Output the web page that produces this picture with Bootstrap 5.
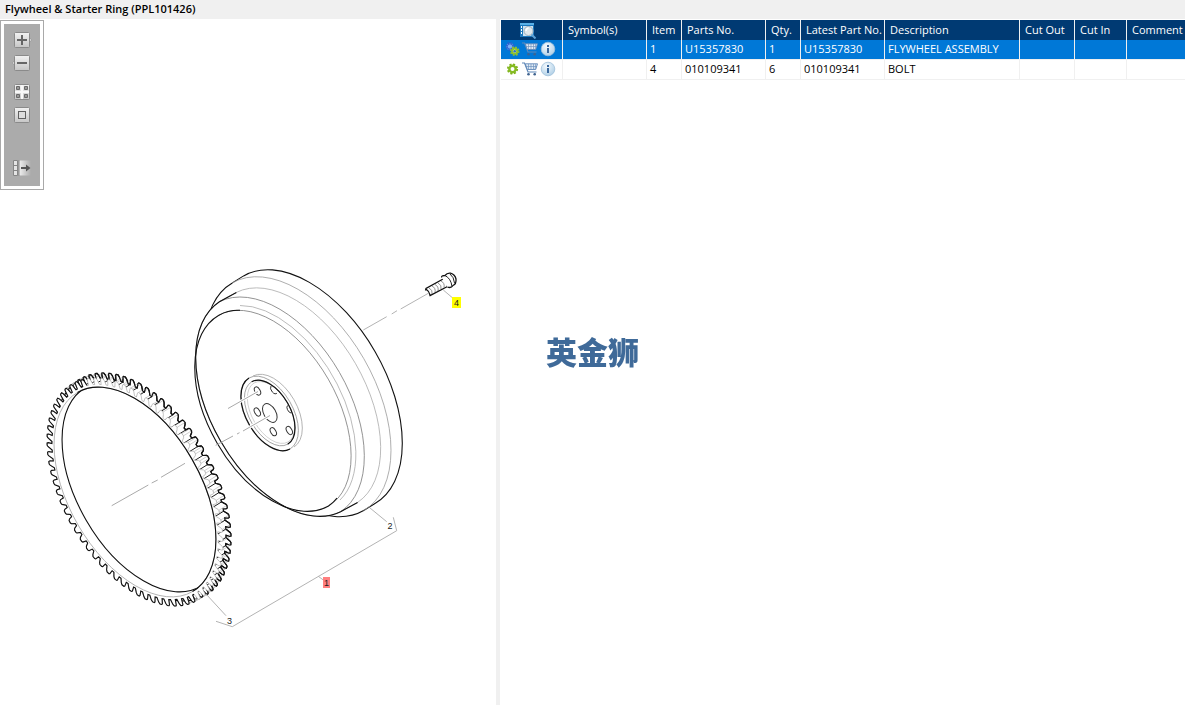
<!DOCTYPE html>
<html lang="en">
<head>
<meta charset="utf-8">
<meta name="viewport" content="width=device-width, initial-scale=1">
<title>Flywheel &amp; Starter Ring (PPL101426)</title>
<link href="https://cdn.jsdelivr.net/npm/bootstrap@5.3.0/dist/css/bootstrap.min.css" rel="stylesheet">
<style>
  body { font-family: "Open Sans", "Noto Sans", sans-serif; font-size: 11px; line-height: 19px; color: #000; background: #f0f0f0; }
  .page-title { font-size: 11px; font-weight: 600; line-height: 18px; padding: 0 0 1px 5px; }
  .panes { display: grid; grid-template-columns: 496fr 4px 685fr; min-height: 0; }
  .pane { background: #fff; min-width: 0; }
  .tools { top: 1px; width: 44px; padding: 3px; border: 1px solid #a9a9a9; background: #fff; }
  .tools-inner { background: #ababab; padding: 8px 0 10px; gap: 7px; }
  .tool-btn { display: block; padding: 0; border: 0; background: none; line-height: 0; }
  .gap-after-zoom { margin-top: 6px; }
  .gap-after-fit { margin-top: 30px; }
  .drawing text { font-family: "Liberation Sans", sans-serif; font-size: 9px; text-anchor: middle; fill: #222; }
  .parts { table-layout: fixed; margin: 1px 0 0 1px; width: calc(100% - 1px); min-width: 684px; border-collapse: separate; border-spacing: 0; }
  .parts th, .parts td { padding: 0 0 0 3px; white-space: nowrap; overflow: hidden; border-right: 1px solid #f0f0f0; }
  .parts th:last-child, .parts td:last-child { border-right: 0; }
  .parts th { height: 20px; line-height: 20px; padding-left: 5px; font-weight: 400; color: #fff; background: #003a73; }
  .parts td { height: 20px; line-height: 18px; padding-bottom: 1px; border-bottom: 1px solid #f0f0f0; }
  .parts .chosen td { color: #fff; background: #0078d7; }
  .parts .actions { padding-left: 4px; }
  .row-icons { gap: 2px; }
  .row-btn { padding: 0; border: 0; background: none; line-height: 0; }
  .search-btn { margin-right: 8px; }
  .stamp { font-family: "Noto Sans CJK SC", sans-serif; font-weight: 900; font-size: 31px; line-height: 32px; padding-bottom: 5px; color: #3f6a99; white-space: nowrap; }
  .c-act { width: 62px; } .c-wide { width: 84px; } .c-slim { width: 35px; }
  .c-desc { width: 135px; } .c-out { width: 55px; } .c-in { width: 52px; }
</style>
</head>
<body class="vh-100 d-flex flex-column overflow-hidden">

<svg width="0" height="0" class="position-absolute" aria-hidden="true">
  <defs>
    <linearGradient id="face" x1="0" y1="0" x2="0" y2="1"><stop offset="0" stop-color="#f2f2f2"/><stop offset="1" stop-color="#c6c6c6"/></linearGradient>
    <linearGradient id="fade" x1="0" y1="0" x2="1" y2="0"><stop offset="0" stop-color="#f0f0f0"/><stop offset="1" stop-color="#ababab"/></linearGradient>
    <radialGradient id="glass" cx=".4" cy=".3" r=".8"><stop offset="0" stop-color="#f4fafe"/><stop offset="1" stop-color="#a9cbe4"/></radialGradient>
    <symbol id="cart" viewBox="0 0 16 16">
      <path d="M0 2h2.500l3.500 9h8.500" fill="none" stroke="#5f88b8" stroke-width="1.200"/>
      <path d="M3.300 2.800h12.200l-1.800 5.700h-8.400z" fill="#e2ebf4" stroke="#5f88b8" stroke-width=".9"/>
      <path d="M6.500 3v5M9 3v5M11.500 3v5M13.700 3l-.5 5M4 5.500h11" stroke="#6f94c0" stroke-width=".7"/>
      <circle cx="6.500" cy="13.200" r="1.300" fill="#3f638f"/><circle cx="12.700" cy="13.200" r="1.300" fill="#3f638f"/>
    </symbol>
    <symbol id="info" viewBox="0 0 16 16">
      <circle cx="8" cy="8" r="6.800" fill="url(#glass)" stroke="#9fc0da" stroke-width=".8"/>
      <path d="M7 4h2v2H7zM7 7h2v5H7z" fill="#3a699f"/>
    </symbol>
    <symbol id="cog" viewBox="-7 -7 14 14">
      <circle r="4.600" fill="none" stroke="#7fb31c" stroke-width="2" stroke-dasharray="2 1.613"/>
      <circle r="3.200" fill="none" stroke="#86bb22" stroke-width="2.400"/>
    </symbol>
    <symbol id="cogs" viewBox="0 0 14 14">
      <g transform="translate(4.500 4.500)"><circle r="3.600" fill="#6fa4ee" stroke="#2a5fd0" stroke-width="1.800" stroke-dasharray="1.600 1.230"/><circle r="2.700" fill="#7fb0f5" stroke="#2a5fd0"/></g>
      <g transform="translate(9.200 9.200)"><circle r="4" fill="none" stroke="#8fc12b" stroke-width="1.600" stroke-dasharray="1.700 1.442"/><circle r="2.600" fill="#d9ecb0" stroke="#8fc12b" stroke-width="2"/><circle r="1.300" fill="#2d74c4"/></g>
    </symbol>
  </defs>
</svg>

<h1 class="page-title m-0 flex-shrink-0">Flywheel &amp; Starter Ring (PPL101426)</h1>

<main class="panes flex-grow-1">
  <section class="pane position-relative overflow-hidden" aria-label="Drawing">
    <div class="tools position-absolute start-0">
      <div class="tools-inner d-flex flex-column align-items-center">
        <button class="tool-btn" type="button" aria-label="Zoom in">
          <svg width="20" height="16" viewBox="0 0 20 16"><path d="M17 5l2.500 3L17 11z" fill="#eee" stroke="#8a8a8a" stroke-width=".7"/><rect x="2.500" y=".5" width="15" height="15" rx="1" fill="url(#face)" stroke="#8a8a8a"/><path d="M5 8h10M10 3v10" stroke="#666" stroke-width="2"/></svg>
        </button>
        <button class="tool-btn" type="button" aria-label="Zoom out">
          <svg width="20" height="16" viewBox="0 0 20 16"><path d="M3 5L.5 8 3 11z" fill="#eee" stroke="#8a8a8a" stroke-width=".7"/><rect x="2.500" y=".5" width="15" height="15" rx="1" fill="url(#face)" stroke="#8a8a8a"/><path d="M5 8h10" stroke="#666" stroke-width="2"/></svg>
        </button>
        <button class="tool-btn gap-after-zoom" type="button" aria-label="Fit to window">
          <svg width="16" height="16"><rect x=".5" y=".5" width="15" height="15" rx="1" fill="url(#face)" stroke="#8a8a8a"/><path d="M8 1v14M1 8h14" stroke="#f8f8f8" stroke-width="2"/><g fill="#999" stroke="#6a6a6a"><path d="M2.500 2.500h3v3h-3zM10.500 2.500h3v3h-3zM2.500 10.500h3v3h-3zM10.500 10.500h3v3h-3z"/></g></svg>
        </button>
        <button class="tool-btn" type="button" aria-label="Actual size">
          <svg width="16" height="16"><rect x=".5" y=".5" width="15" height="15" rx="1" fill="url(#face)" stroke="#8a8a8a"/><rect x="4.500" y="4.500" width="7" height="7" fill="#ddd" stroke="#606060"/></svg>
        </button>
        <button class="tool-btn gap-after-fit" type="button" aria-label="Hide list">
          <svg width="18" height="16"><path d="M6 .5h12v15H6z" fill="url(#fade)"/><path d="M.5.5h4v15h-4zM.5 5.500h4M.5 10.500h4" fill="#e4e4e4" stroke="#868686"/><path d="M6 0v16" stroke="#868686"/><path d="M8 8h6" stroke="#555" stroke-width="2"/><path d="M13 4.500L17.500 8 13 11.500z" fill="#555"/></svg>
        </button>
      </div>
    </div>

    <svg class="drawing d-block w-100" viewBox="0 19 496 686" fill="none" role="img" aria-label="Exploded view of flywheel, starter ring and bolt">
      <!-- starter ring -->
      <g id="ring"></g>
      <path d="M111.700 505.700L148.300 485M151.700 483l6-3M161 477.300l24-14" stroke="#aaa"/>

      <!-- flywheel rim -->
      <path d="M232.300 282.900L243.600 275.900A131.400 76 60 0 1 375 503.500L363.700 510.500A131.400 76 60 0 1 232.300 282.900Z" fill="#fff" stroke="#111" stroke-width="1.100"/>
      <path d="M232.300 282.900A131.400 76 60 0 1 363.700 510.500" stroke="#999" stroke-width=".8"/>
      <!-- flywheel hub drum -->
      <path d="M219.400 301.700L236.400 292.400A121.300 69.900 60 0 1 357.600 502.400L340.600 511.700A121.300 71 60 0 1 219.400 301.700Z" fill="#fff" stroke="#aaa" stroke-width=".8"/>
      <path d="M219.400 301.700A121.300 71 60 0 1 340.600 511.700" stroke="#777" stroke-width=".8"/>
      <path d="M236.400 292.400L219.400 301.700A121.300 71 60 0 0 340.600 511.700L357.600 502.400" stroke="#111" stroke-width="1.100"/>
      <path d="M240 305.500A112.500 65 60 0 1 340 500" stroke="#aaa" stroke-width=".8"/>
      <path d="M218.500 315.400A110 63.200 60 0 1 328.500 506" stroke="#777" stroke-width=".8"/>
      <path d="M240 310.300Q228 310 218.500 315.400A110 65 60 0 0 328.500 506Q334 502 337 498" stroke="#111" stroke-width="1.100"/>
      <!-- recess with bolt circle -->
      <path d="M253 376A41 24 60 0 1 294 447" stroke="#aaa" stroke-width=".9"/>
      <ellipse cx="269.500" cy="413.500" rx="41" ry="23.500" transform="rotate(60 269.500 413.500)" fill="#fff" stroke="#999" stroke-width=".8"/>
      <path d="M249 378A41 23.500 60 0 0 290 449" stroke="#111" stroke-width="1.200"/>
      <ellipse cx="271" cy="412.500" rx="34" ry="19" transform="rotate(60 271 412.500)" stroke="#ccc" stroke-width=".8"/>
      <ellipse cx="269.700" cy="413" rx="36" ry="20.500" transform="rotate(60 269.700 413)" stroke="#999" stroke-width=".8"/>
      <path d="M251.700 381.800A36 20.500 60 0 1 287.700 444.200" stroke="#111" stroke-width="1.200"/>
      <g stroke="#333" fill="#fff" stroke-width="1">
        <ellipse cx="269.800" cy="413" rx="10.300" ry="6" transform="rotate(60 269.800 413)"/>
        <ellipse cx="257.500" cy="391" rx="4.400" ry="2.600" transform="rotate(60 257.500 391)"/>
        <ellipse cx="257.300" cy="412" rx="4.400" ry="2.600" transform="rotate(60 257.300 412)"/>
        <ellipse cx="273.300" cy="431.700" rx="4.400" ry="2.600" transform="rotate(60 273.300 431.700)"/>
        <ellipse cx="289.300" cy="430.500" rx="4.400" ry="2.600" transform="rotate(60 289.300 430.500)"/>
        <path d="M271 386a4.400 2.600 60 0 0 6 7M287.500 405.500a4.400 2.600 60 0 0 3.500 7.500"/>
      </g>
      <path d="M228 408.500L258 391.500M243 431l27-15.500" stroke="#fff" stroke-width="3"/>
      <path d="M228 408.500L258 391.500M215.700 445.300l17.300-9.300M237 434l2.500-1.300M243 431l27-15.500" stroke="#aaa"/>

      <!-- bolt -->
      <path d="M363.300 330l23.400-13.300M391.700 314l5.300-3.300M400.700 309l27.600-15.700" stroke="#aaa" stroke-width=".9"/>
      <path d="M426 289l16-9.500 7 7-19.500 9z" fill="#fff"/>
      <path d="M429 288q4 2 3 6M432 286q4 2 3 6.500M435 284.500q4 2 3 6.500M438 283q4 2 3 6M441 281q4 2 3 6.500M444 279.500q4 2 3 6.500" stroke="#777" stroke-width=".8"/>
      <path d="M425.500 290.500l.5-2 18-10M429.500 295.800l18-9.300M426 289q3 2 4 6" stroke="#111" stroke-width="1.300"/>
      <path d="M441.700 277.500Q441 275.500 445 275.500Q447 272.800 450.500 273.200Q455 274.500 456 279Q456.500 284 453 285.500Q451 288.500 447.500 287" fill="#fff" stroke="#111" stroke-width="1.300"/>
      <path d="M445 275.500Q451 278.500 452 286.500M450 274q4 3 4.500 9" stroke="#222"/>

      <!-- leaders and callouts -->
      <path d="M443.300 290l9.400 8M370 508l16.700 13.700M206 594l20 21.700M318.300 576.300l5 3.700M393.300 517.300l3.400 13.400L232.300 626.700 216 621.300" stroke="#aaa" stroke-width=".9"/>
      <rect x="452" y="297" width="9" height="11" fill="#ff0"/>
      <rect x="323" y="577" width="7" height="11" fill="#ff7f7f"/>
      <text x="456.500" y="306">4</text>
      <text x="326.500" y="586">1</text>
      <text x="390" y="529">2</text>
      <text x="229.500" y="624">3</text>
    </svg>
  </section>

  <div></div>

  <section class="pane overflow-hidden" aria-label="Parts list">
    <table class="parts">
      <colgroup><col class="c-act"><col class="c-wide"><col class="c-slim"><col class="c-wide"><col class="c-slim"><col class="c-wide"><col class="c-desc"><col class="c-out"><col class="c-in"><col></colgroup>
      <thead>
        <tr>
          <th class="text-center ps-0">
            <button class="row-btn search-btn align-middle" type="button" aria-label="Search parts">
              <svg width="16" height="16" viewBox="0 0 16 16"><path d="M0 0h14v14H0z" fill="#1d78bd"/><path d="M0 0h14v2H0z" fill="#58b0e8"/><path d="M3 3h10v10H3z" fill="#cfe3f2"/><path d="M1.500 3v2M1.500 6v2M1.500 9v2" stroke="#fff"/><circle cx="8.500" cy="8" r="4.500" fill="#dfe7ec" stroke="#9fb0bd"/><path d="M6 8q0-2.500 2.500-3" fill="none" stroke="#fff" stroke-width="1.500"/><path d="M11.500 11.500l4 4" stroke="#5ba0d6" stroke-width="2"/></svg>
            </button>
          </th>
          <th>Symbol(s)</th><th>Item</th><th>Parts No.</th><th>Qty.</th><th>Latest Part No.</th><th>Description</th><th>Cut Out</th><th>Cut In</th><th>Comment</th>
        </tr>
      </thead>
      <tbody>
        <tr class="chosen">
          <td class="actions"><div class="row-icons d-flex align-items-center">
            <button class="row-btn" type="button" aria-label="Assembly"><svg width="15" height="14"><use href="#cogs"/></svg></button>
            <button class="row-btn" type="button" aria-label="Add to cart"><svg width="16" height="16"><use href="#cart"/></svg></button>
            <button class="row-btn" type="button" aria-label="Information"><svg width="16" height="16"><use href="#info"/></svg></button></div></td>
          <td></td><td>1</td><td>U15357830</td><td>1</td><td>U15357830</td><td>FLYWHEEL ASSEMBLY</td><td></td><td></td><td></td>
        </tr>
        <tr>
          <td class="actions"><div class="row-icons d-flex align-items-center">
            <button class="row-btn" type="button" aria-label="Part"><svg width="15" height="14"><use href="#cog"/></svg></button>
            <button class="row-btn" type="button" aria-label="Add to cart"><svg width="16" height="16"><use href="#cart"/></svg></button>
            <button class="row-btn" type="button" aria-label="Information"><svg width="16" height="16"><use href="#info"/></svg></button></div></td>
          <td></td><td>4</td><td>010109341</td><td>6</td><td>010109341</td><td>BOLT</td><td></td><td></td><td></td>
        </tr>
      </tbody>
    </table>
  </section>
</main>

<div class="stamp position-fixed top-50 start-50 translate-middle pe-none">英金狮</div>

<script>
  // Ring gear in isometric view: a front and a back toothed profile joined along the 30 degree axis.
  const TEETH = 72, STEP = 2 * Math.PI / TEETH, FRONT = [135, 492], BACK = [143, 487];
  const at = (c, r, t) => {
    const u = r * Math.cos(t), v = r * .572 * Math.sin(t);
    return (c[0] + u * .5 - v * .866).toFixed(1) + ' ' + (c[1] + u * .866 + v * .5).toFixed(1);
  };
  const tooth = (c, t) => [[118, 0], [118, .25], [124, .4], [125, .5], [125, .75], [123, .88], [118, 1]].map(p => at(c, p[0], t + p[1] * STEP));
  const profile = (c, from, to) => {
    let pts = [];
    for (let k = from; k < to; k++) pts = pts.concat(tooth(c, k * STEP));
    return 'M' + pts.join('L');
  };
  const path = (d, stroke, width, fill) => `<path d="${d}" stroke="${stroke}" stroke-width="${width}" fill="${fill || 'none'}"/>`;
  let out = path(profile(BACK, 0, TEETH) + 'Z', '#111', 1.2, '#fff');
  for (let k = TEETH / 2 - 2; k < TEETH + 2; k++) {
    const f = tooth(FRONT, k * STEP), b = tooth(BACK, k * STEP);
    out += path(`M${f[3]}L${b[3]}L${b[4]}L${f[4]}Z`, '#bbb', .7, '#fff');
    out += path(`M${f[1]}L${b[1]}`, '#222', 1);
  }
  out += path(profile(BACK, TEETH / 2 - 1, TEETH + 1), '#111', 1.2);
  out += path(profile(FRONT, 0, TEETH) + 'Z', '#aaa', .7, '#fff');
  out += path(profile(FRONT, 0, TEETH / 2 + 2), '#111', 1.1);
  out += '<clipPath id="bore"><ellipse cx="135" cy="492" rx="115" ry="65.800" transform="rotate(60 135 492)"/></clipPath>';
  out += '<ellipse cx="135" cy="492" rx="115" ry="65.800" transform="rotate(60 135 492)" fill="#fff" stroke="#aaa" stroke-width=".8"/>';
  out += path('M' + at(FRONT, 115, Math.PI) + 'A115 65.800 60 0 1 ' + at(FRONT, 115, 0), '#111', 1.1);
  out += '<g clip-path="url(#bore)"><ellipse cx="143" cy="487" rx="115" ry="65.800" transform="rotate(60 143 487)" stroke="#111" stroke-width="1.100"/></g>';
  document.getElementById('ring').innerHTML = out;
</script>
<script src="https://cdn.jsdelivr.net/npm/bootstrap@5.3.0/dist/js/bootstrap.bundle.min.js"></script>
</body>
</html>
